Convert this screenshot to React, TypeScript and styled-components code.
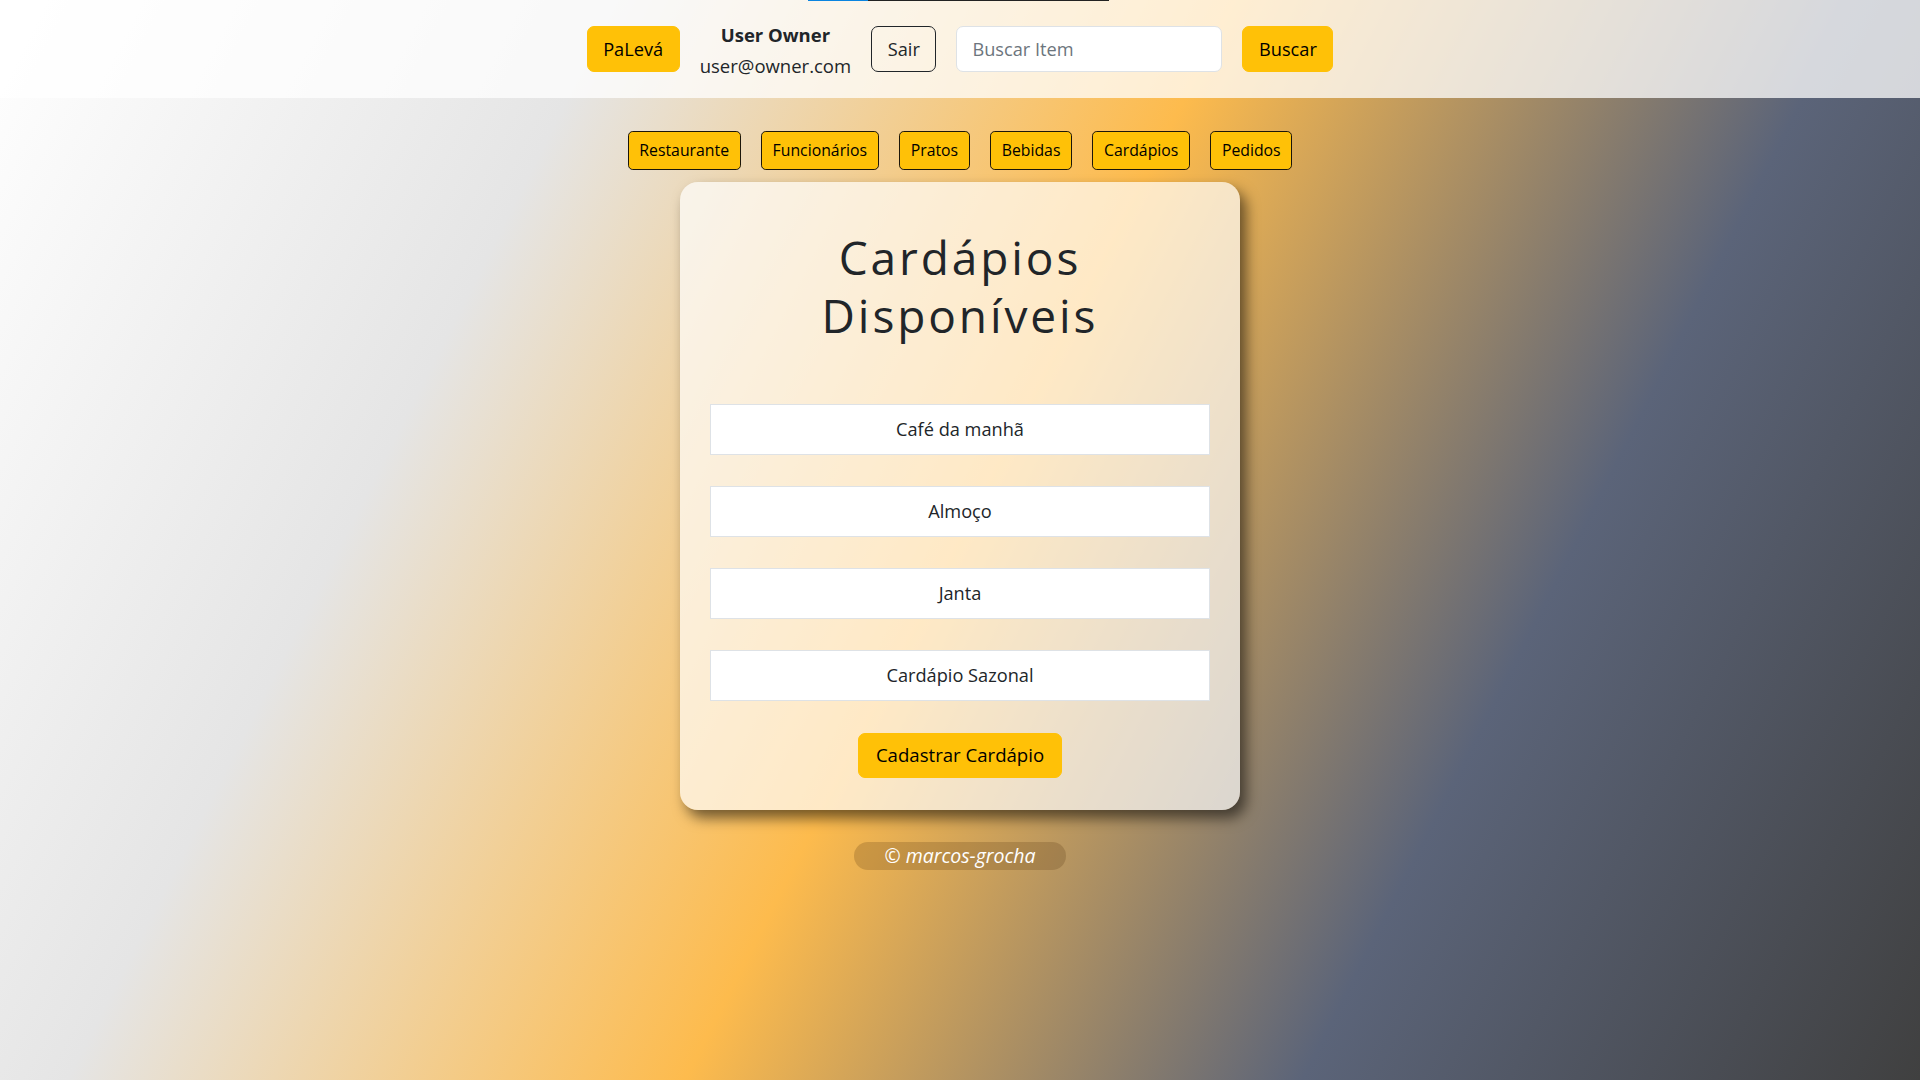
import React from "react";
import styled, { createGlobalStyle } from "styled-components";

const GlobalStyle = createGlobalStyle`
  html, body {
    margin: 0;
    padding: 0;
  }
  body {
    font-family: "Open Sans", "Noto Sans", sans-serif;
    color: #212529;
  }
  * { box-sizing: border-box; }
`;

const Page = styled.div`
  position: relative;
  min-height: 100vh;
  background: linear-gradient(117deg, #ffffff 0%, #e5e5e5 25%, #fdbb4d 50%, #5b6479 75%, #404040 100%);
  display: flex;
  flex-direction: column;
  align-items: center;
`;

const TopIndicator = styled.div`
  position: absolute;
  top: 0;
  left: 808px;
  width: 301px;
  height: 1px;
  display: flex;
`;

const IndicatorPart = styled.span<{ $w: number; $c: string }>`
  width: ${(p) => p.$w}px;
  height: 100%;
  background: ${(p) => p.$c};
`;

const Header = styled.header`
  width: 100%;
  height: 98px;
  background: rgba(255, 255, 255, 0.75);
  display: flex;
  align-items: center;
  justify-content: center;
  gap: 20px;
`;

const Button = styled.button<{ $outline?: boolean }>`
  font-family: "Open Sans", "Noto Sans", sans-serif;
  font-size: 18.2px;
  line-height: 28.8px;
  padding: 7.2px 15.6px;
  border-radius: 7px;
  border: 1.2px solid ${(p) => (p.$outline ? "#212529" : "#ffc107")};
  background: ${(p) => (p.$outline ? "transparent" : "#ffc107")};
  color: ${(p) => (p.$outline ? "#212529" : "#000")};
  cursor: pointer;
`;

const UserInfo = styled.div`
  display: flex;
  flex-direction: column;
  align-items: center;
  padding-top: 2px;
  line-height: 31px;
  font-size: 18.5px;
  color: #212529;
`;

const UserName = styled.span`
  font-weight: 700;
`;

const SearchInput = styled.input`
  width: 266px;
  height: 46px;
  font-family: "Open Sans", "Noto Sans", sans-serif;
  font-size: 18.2px;
  padding: 0 15px;
  border: 1.2px solid #dee2e6;
  border-radius: 7px;
  background: #fff;
  color: #212529;
  &::placeholder { color: #6c757d; }
`;

const NavRow = styled.nav`
  margin-top: 33px;
  display: flex;
  gap: 20px;
`;

const NavButton = styled.button`
  font-family: "Open Sans", "Noto Sans", sans-serif;
  font-size: 15.8px;
  line-height: 27.6px;
  padding: 4.8px 10.8px;
  border: 1.2px solid #1c1609;
  border-radius: 4.8px;
  background: #ffc107;
  color: #000;
  cursor: pointer;
`;

const Card = styled.section`
  margin-top: 12px;
  width: 560px;
  padding: 30px 30px 32px;
  border-radius: 18px;
  background: rgba(255, 255, 255, 0.68);
  box-shadow: 6px 8px 14px rgba(0, 0, 0, 0.55);
  display: flex;
  flex-direction: column;
  align-items: center;
`;

const Title = styled.h1`
  margin: 16px 0 59.5px;
  font-size: 46px;
  line-height: 58px;
  font-weight: 400;
  letter-spacing: 2.9px;
  text-align: center;
  color: #212529;
`;

const MenuList = styled.ul`
  list-style: none;
  margin: 0;
  padding: 0;
  width: 100%;
  display: flex;
  flex-direction: column;
  gap: 31px;
`;

const MenuItem = styled.li`
  height: 51px;
  display: flex;
  align-items: center;
  justify-content: center;
  background: #fff;
  border: 1px solid #dee2e6;
  font-size: 18.2px;
  color: #212529;
`;

const CreateButton = styled(Button)`
  margin-top: 32px;
  padding: 7.2px 17px;
  font-size: 18.6px;
`;

const Footer = styled.footer`
  margin-top: 32px;
  height: 28px;
  padding: 0 30px;
  border-radius: 14px;
  background: rgba(80, 50, 15, 0.22);
  color: #fff;
  font-style: italic;
  font-size: 19.5px;
  display: flex;
  align-items: center;
`;

const menus = ["Café da manhã", "Almoço", "Janta", "Cardápio Sazonal"];
const navItems = ["Restaurante", "Funcionários", "Pratos", "Bebidas", "Cardápios", "Pedidos"];

export default function App() {
  return (
    <>
      <GlobalStyle />
      <Page>
        <TopIndicator>
          <IndicatorPart $w={60} $c="#0a84e0" />
          <IndicatorPart $w={241} $c="#222222" />
        </TopIndicator>
        <Header>
          <Button>PaLevá</Button>
          <UserInfo>
            <UserName>User Owner</UserName>
            <span>user@owner.com</span>
          </UserInfo>
          <Button $outline>Sair</Button>
          <SearchInput placeholder="Buscar Item" />
          <Button>Buscar</Button>
        </Header>
        <NavRow>
          {navItems.map((n) => (
            <NavButton key={n}>{n}</NavButton>
          ))}
        </NavRow>
        <Card>
          <Title>
            Cardápios
            <br />
            Disponíveis
          </Title>
          <MenuList>
            {menus.map((m) => (
              <MenuItem key={m}>{m}</MenuItem>
            ))}
          </MenuList>
          <CreateButton>Cadastrar Cardápio</CreateButton>
        </Card>
        <Footer>© marcos-grocha</Footer>
      </Page>
    </>
  );
}
